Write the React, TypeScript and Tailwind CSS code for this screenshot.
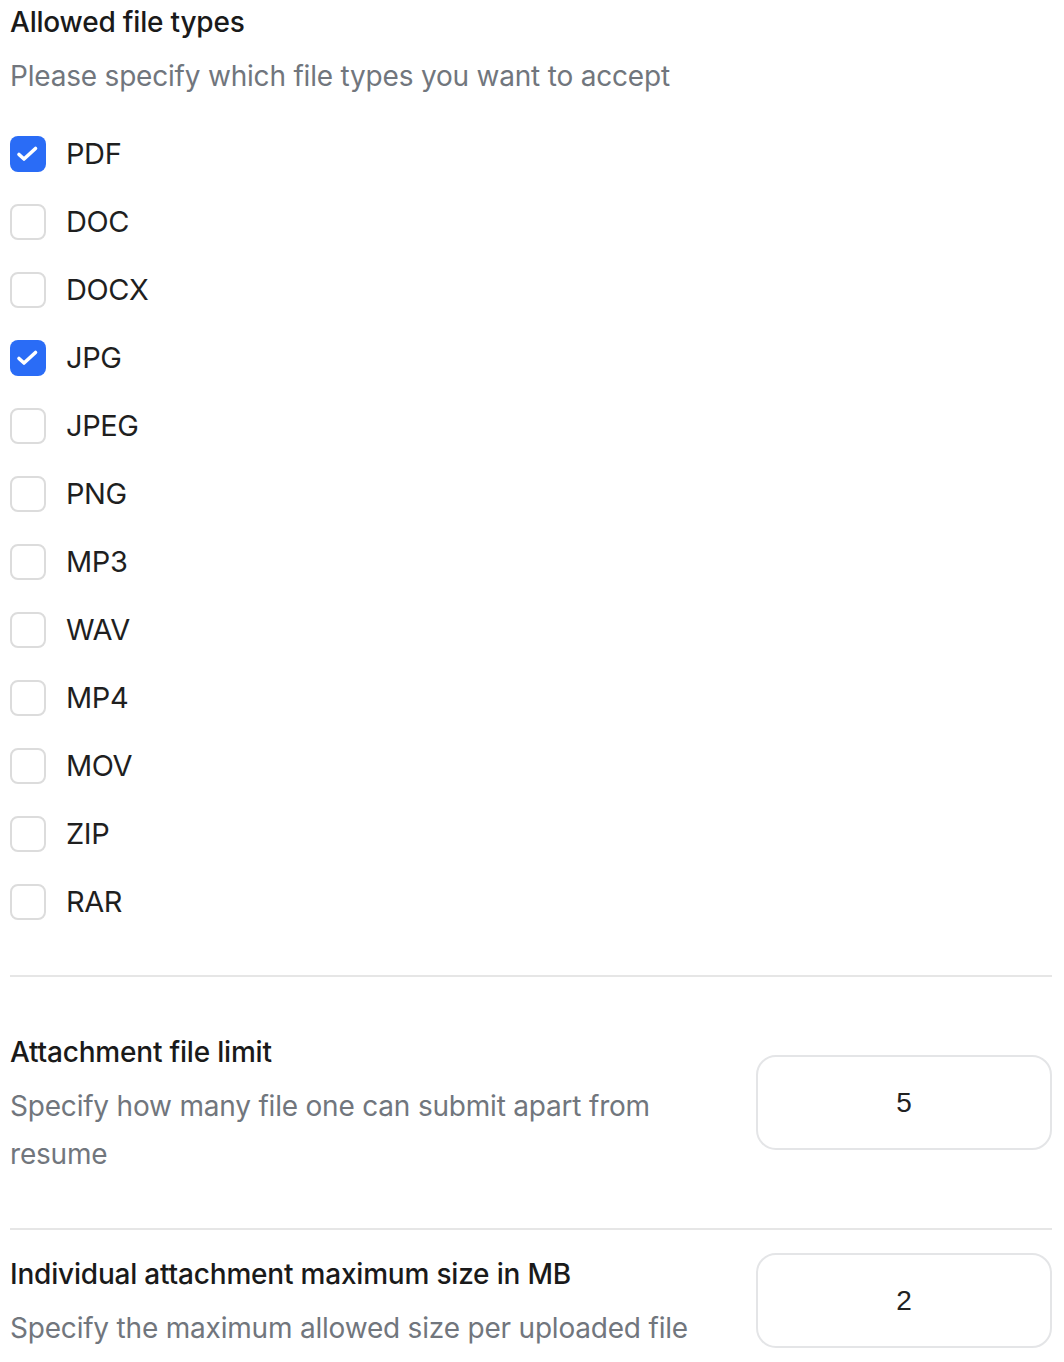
import React from 'react';

const fileTypes = [
  { name: 'PDF', checked: true },
  { name: 'DOC', checked: false },
  { name: 'DOCX', checked: false },
  { name: 'JPG', checked: true },
  { name: 'JPEG', checked: false },
  { name: 'PNG', checked: false },
  { name: 'MP3', checked: false },
  { name: 'WAV', checked: false },
  { name: 'MP4', checked: false },
  { name: 'MOV', checked: false },
  { name: 'ZIP', checked: false },
  { name: 'RAR', checked: false },
];

const Checkbox: React.FC<{ checked: boolean }> = ({ checked }) =>
  checked ? (
    <span className="w-[36px] h-[36px] rounded-[8px] bg-[#2a6cf6] flex items-center justify-center shrink-0">
      <svg width="24" height="24" viewBox="0 0 24 24" fill="none">
        <path d="M3 12.5l5 4.5L19.5 6.5" stroke="#fff" strokeWidth="3.6" strokeLinecap="round" strokeLinejoin="round" />
      </svg>
    </span>
  ) : (
    <span className="w-[36px] h-[36px] rounded-[8px] border-2 border-[#dcdcdc] bg-white shrink-0" />
  );

const NumberBox: React.FC<{ value: string }> = ({ value }) => (
  <div
    className="w-[296px] h-[95px] mb-[5px] rounded-[20px] border-2 border-[#e4e5e7] flex items-center justify-center text-[28px] text-[#222] shrink-0"
    style={{ fontFamily: '"Liberation Sans", Arial, sans-serif' }}
  >
    {value}
  </div>
);

export default function App() {
  return (
    <div className="bg-white min-h-screen pl-[10px] pr-[12px] pt-[2px]" style={{ fontFamily: 'Inter, "Noto Sans", sans-serif' }}>
      {/* Allowed file types */}
      <h2 className="text-[28px] leading-[40px] font-medium text-[#1a1a1a] tracking-[-0.2px]">Allowed file types</h2>
      <p className="mt-[10px] text-[28px] leading-[48px] text-[#71767d] tracking-[-0.2px]">
        Please specify which file types you want to accept
      </p>
      <div className="mt-[20px] flex flex-col">
        {fileTypes.map((t) => (
          <label key={t.name} className="h-[68px] flex items-center gap-[20px]">
            <Checkbox checked={t.checked} />
            <span className="text-[29px] text-[#1f1f1f] tracking-[-0.4px]">{t.name}</span>
          </label>
        ))}
      </div>

      <div className="mt-[39px] h-[2px] bg-[#e6e6e6]" />

      {/* Attachment file limit */}
      <div className="pt-[55px] pb-[50px] flex items-center justify-between">
        <div className="w-[680px]">
          <h2 className="text-[28px] leading-[40px] font-medium text-[#1a1a1a] tracking-[-0.2px]">Attachment file limit</h2>
          <p className="mt-[10px] text-[28px] leading-[48px] text-[#71767d] tracking-[-0.2px]">
            Specify how many file one can submit apart from resume
          </p>
        </div>
        <NumberBox value="5" />
      </div>

      <div className="h-[2px] bg-[#e6e6e6]" />

      {/* Individual attachment maximum size */}
      <div className="pt-[23px] flex items-center justify-between">
        <div>
          <h2 className="text-[28px] leading-[40px] font-medium text-[#1a1a1a] tracking-[-0.2px]">
            Individual attachment maximum size in MB
          </h2>
          <p className="mt-[10px] text-[28px] leading-[48px] text-[#71767d] tracking-[-0.2px]">
            Specify the maximum allowed size per uploaded file
          </p>
        </div>
        <NumberBox value="2" />
      </div>
    </div>
  );
}
